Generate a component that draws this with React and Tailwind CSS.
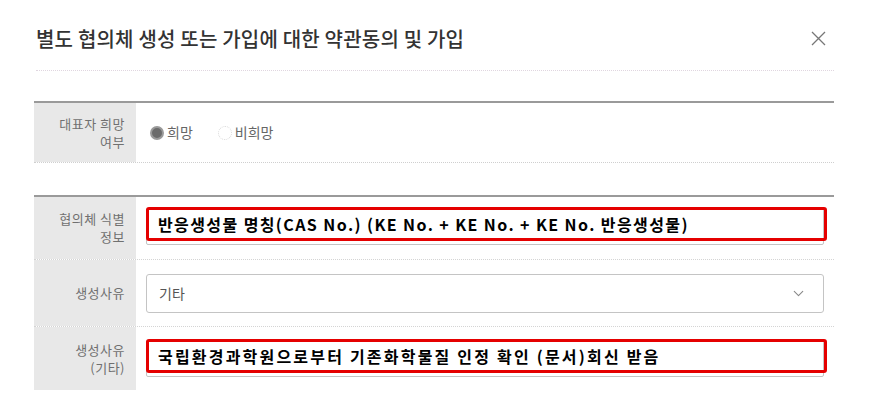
import { ChevronDown } from 'lucide-react';

const kr = { fontFamily: '"Noto Sans CJK KR", "Noto Sans", sans-serif' };

const Label = ({ children }) => (
  <div className="w-[102px] shrink-0 bg-[#e8e8e8] flex items-center justify-end pr-[11px] text-right text-[13px] leading-[18px] tracking-[0.5px] text-[#707070]">
    <div>{children}</div>
  </div>
);

// highlighted input with a red marker frame laid over it
const MarkedInput = ({ text, wide }) => (
  <div className="relative h-[37px] border border-[#c4c4c4] rounded-[2px] bg-white">
    <div className="absolute -top-[2px] -left-[1px] -right-[4px] bottom-[3px] border-[3px] border-[#e50000] rounded-[3px] flex items-center pl-[9px]">
      <span className={`text-[16px] font-bold text-black whitespace-nowrap ${wide ? 'tracking-[2.2px]' : 'tracking-[1.4px]'}`}>{text}</span>
    </div>
  </div>
);

export default function App() {
  return (
    <div className="w-[869px] h-[404px] bg-white overflow-hidden" style={kr}>
      <header className="flex items-center justify-between pl-[36px] pr-[43px] pt-[27px] h-[50px]">
        <h1 className="text-[20px] font-medium text-[#333] leading-none tracking-[0.2px]">별도 협의체 생성 또는 가입에 대한 약관동의 및 가입</h1>
        <svg width="15" height="15" viewBox="0 0 15 15" className="text-[#777]">
          <path d="M1 1 L14 14 M14 1 L1 14" stroke="currentColor" strokeWidth="1.3" fill="none" />
        </svg>
      </header>

      <div className="ml-[36px] w-[798px] mt-[20px] border-t border-dotted border-[#e0d6e0]" />

      {/* 대표자 여부 */}
      <div className="ml-[34px] w-[800px] mt-[30px] border-t-2 border-[#9a9a9a]">
        <div className="flex h-[60px] border-b border-dotted border-[#cfcfcf]">
          <Label>대표자 희망<br />여부</Label>
          <div className="flex items-center pl-[14px] text-[14px] text-[#666]">
            <label className="flex items-center gap-[3px]">
              <span className="w-[14px] h-[14px] rounded-full bg-[#6b6b6b] border-2 border-[#9a9a9a]" />
              희망
            </label>
            <label className="flex items-center gap-[3px] ml-[25px]">
              <span className="w-[14px] h-[14px] rounded-full border border-dotted border-[#d8d8d8]" />
              비희망
            </label>
          </div>
        </div>
      </div>

      {/* 협의체 정보 */}
      <div className="ml-[34px] w-[800px] mt-[32px] border-t-2 border-[#9a9a9a]">
        <div className="flex h-[63px] border-b border-dotted border-[#d4d4d4]">
          <Label>협의체 식별<br />정보</Label>
          <div className="flex-1 pl-[10px] pr-[10px] pt-[11px]">
            <MarkedInput text="반응생성물 명칭(CAS No.) (KE No. + KE No. + KE No. 반응생성물)" />
          </div>
        </div>
        <div className="flex h-[67px] border-b border-dotted border-[#d4d4d4]">
          <Label>생성사유</Label>
          <div className="flex-1 pl-[10px] pr-[10px] flex items-center">
            <div className="w-full h-[39px] border border-[#c4c4c4] rounded-[3px] flex items-center justify-between pl-[12px] pr-[16px] text-[14px] text-[#555]">
              <span>기타</span>
              <ChevronDown size={17} strokeWidth={1.5} className="text-[#888]" />
            </div>
          </div>
        </div>
        <div className="flex h-[63px]">
          <Label>생성사유<br />(기타)</Label>
          <div className="flex-1 pl-[10px] pr-[10px] pt-[13px]">
            <MarkedInput text="국립환경과학원으로부터 기존화학물질 인정 확인 (문서)회신 받음" wide />
          </div>
        </div>
      </div>
    </div>
  );
}
